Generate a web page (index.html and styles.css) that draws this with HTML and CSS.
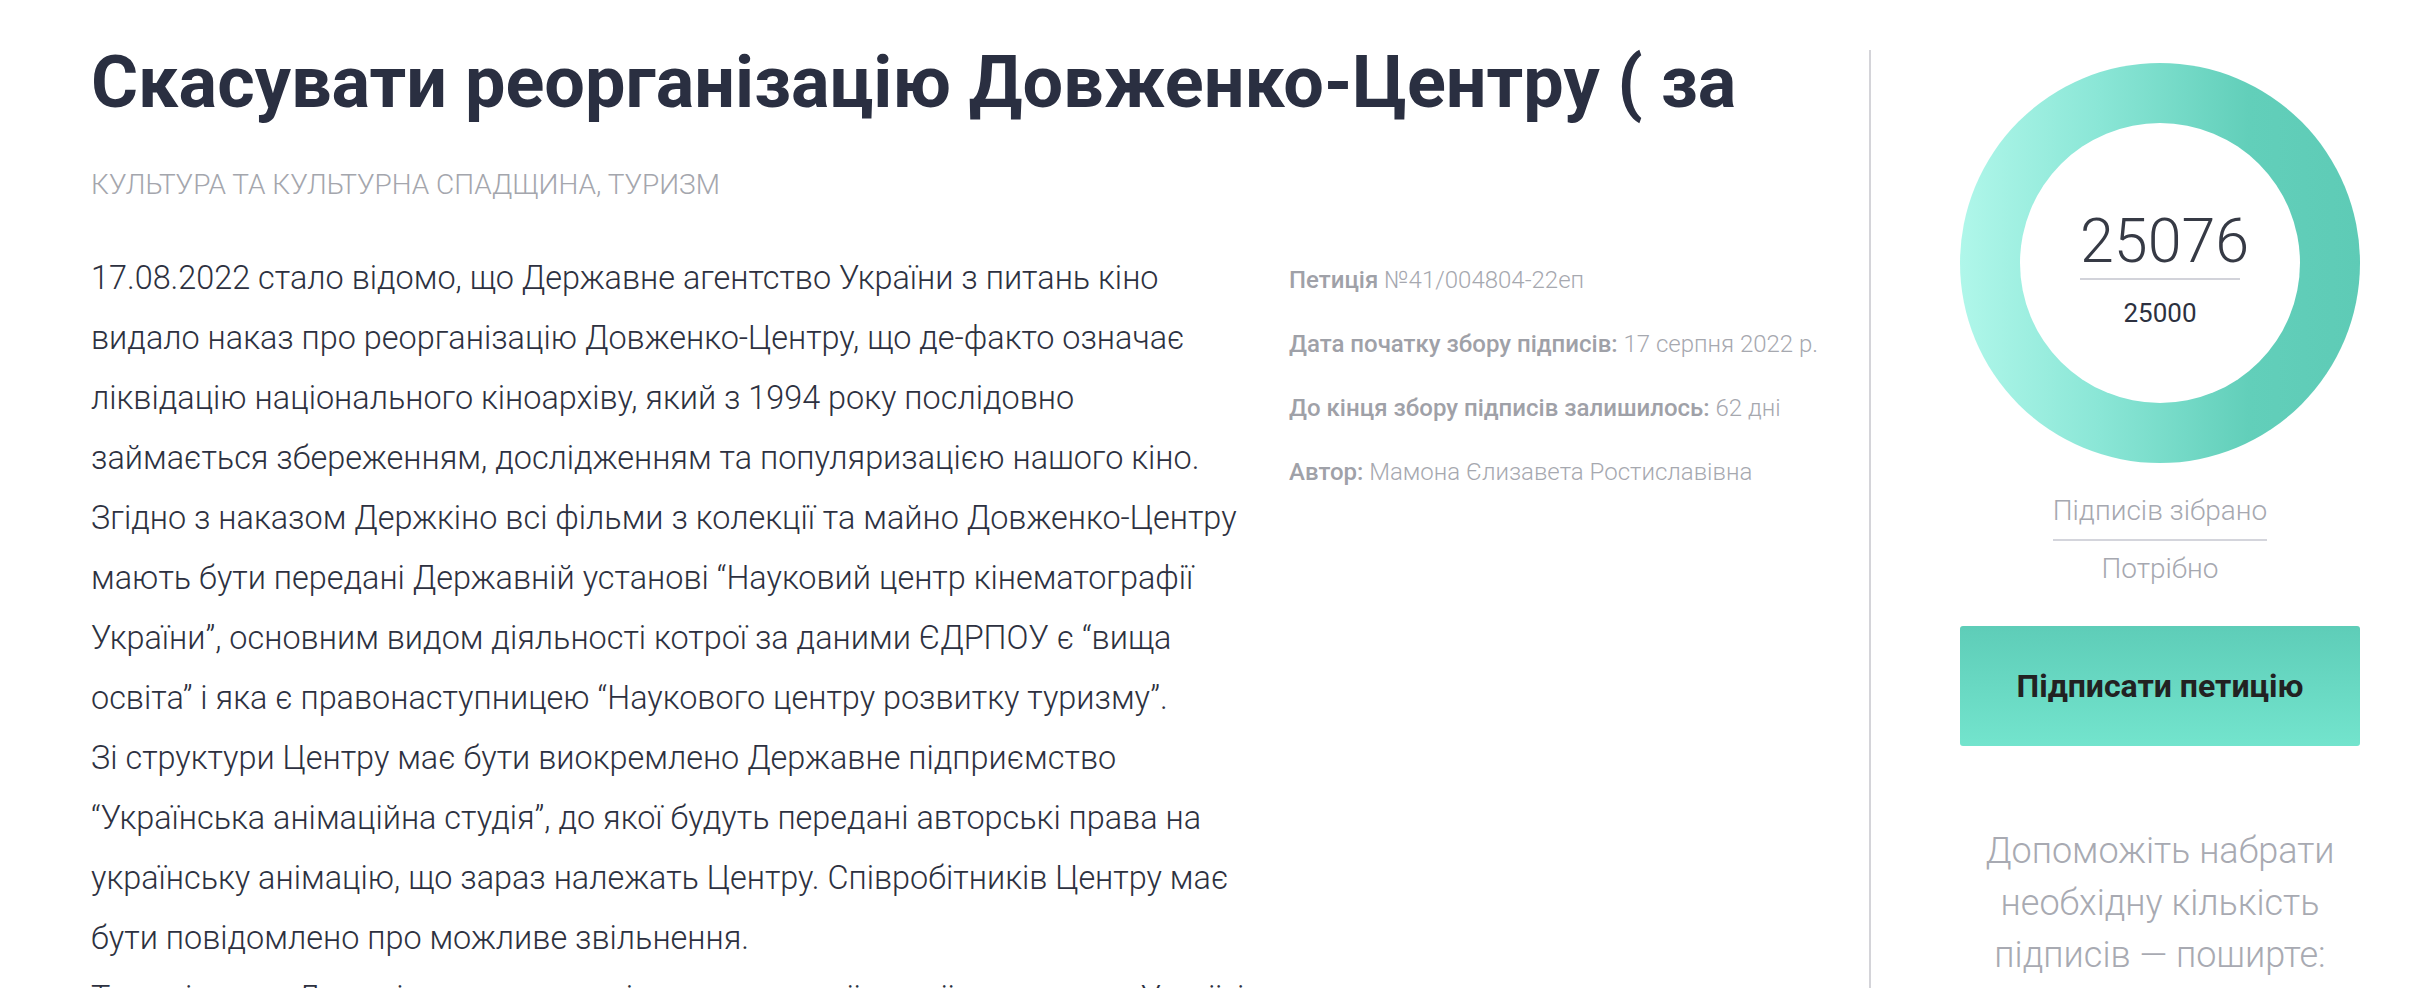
FILE: index.html
```html
<!DOCTYPE html>
<html lang="uk">
<head>
<meta charset="utf-8">
<title>Петиція</title>
<link rel="stylesheet" href="styles.css">
</head>
<body>
<div class="page">
  <main class="main">
    <h1 class="title">Скасувати реорганізацію Довженко-Центру ( за</h1>
    <div class="category">Культура та культурна спадщина, туризм</div>
    <div class="content">
      <div class="text">
        <p>17.08.2022 стало відомо, що Державне агентство України з питань кіно<br>видало наказ про реорганізацію Довженко-Центру, що де-факто означає<br>ліквідацію національного кіноархіву, який з 1994 року послідовно<br>займається збереженням, дослідженням та популяризацією нашого кіно.</p>
        <p>Згідно з наказом Держкіно всі фільми з колекції та майно Довженко-Центру<br>мають бути передані Державній установі “Науковий центр кінематографії<br>України”, основним видом діяльності котрої за даними ЄДРПОУ є “вища<br>освіта” і яка є правонаступницею “Наукового центру розвитку туризму”.</p>
        <p>Зі структури Центру має бути виокремлено Державне підприємство<br>“Українська анімаційна студія”, до якої будуть передані авторські права на<br>українську анімацію, що зараз належать Центру. Співробітників Центру має<br>бути повідомлено про можливе звільнення.</p>
        <p>Таке рішення Держкіно суперечить інтересам української культури та Україні загалом.</p>
      </div>
      <div class="meta">
        <div class="meta-row"><span class="label">Петиція</span> №41/004804-22еп</div>
        <div class="meta-row"><span class="label">Дата початку збору підписів:</span> 17 серпня 2022 р.</div>
        <div class="meta-row"><span class="label">До кінця збору підписів залишилось:</span> 62 дні</div>
        <div class="meta-row"><span class="label">Автор:</span> Мамона Єлизавета Ростиславівна</div>
      </div>
    </div>
  </main>
  <aside class="sidebar">
    <div class="ring">
      <div class="ring-inner">
        <div class="count">25076</div>
        <div class="needed">25000</div>
      </div>
    </div>
    <div class="labels">
      <div class="label-collected">Підписів зібрано</div>
      <div class="label-needed">Потрібно</div>
    </div>
    <button class="sign-btn" type="button">Підписати петицію</button>
    <p class="help">Допоможіть набрати необхідну кількість підписів — поширте:</p>
  </aside>
</div>
</body>
</html>
```

FILE: styles.css
```css
html, body {
  margin: 0;
  padding: 0;
  background: #ffffff;
  font-family: Roboto, "Noto Sans", "Liberation Sans", sans-serif;
}

body {
  width: 2418px;
  height: 988px;
  overflow: hidden;
}

.page {
  display: flex;
  align-items: stretch;
  height: 988px;
}

.main {
  width: 1778px;
  padding: 40px 0 0 91px;
  flex: none;
}

.title {
  margin: 0;
  font-size: 72px;
  line-height: 86px;
  font-weight: 700;
  color: #2a2f41;
  white-space: nowrap;
}

.category {
  margin-top: 42px;
  font-size: 28px;
  line-height: 34px;
  font-weight: 300;
  color: #a4a6ad;
  text-transform: uppercase;
}

.content {
  display: flex;
  margin-top: 46px;
  gap: 18px;
}

.text {
  width: 1180px;
  flex: none;
  font-size: 32.4px;
  line-height: 60px;
  font-weight: 300;
  color: #2d3140;
}

.text p {
  margin: 0;
}

.meta {
  font-size: 24px;
  line-height: 64px;
  color: #a6a8af;
  font-weight: 300;
}

.meta-row {
  white-space: nowrap;
}

.meta .label {
  font-weight: 500;
  color: #9fa1a8;
}

.sidebar {
  margin-top: 50px;
  border-left: 2px solid #d4d4d9;
  padding: 13px 0 0 89px;
  width: 400px;
  display: flex;
  flex-direction: column;
  align-items: center;
}

.ring {
  width: 400px;
  height: 400px;
  border-radius: 50%;
  background: linear-gradient(90deg, #b0f7ea 0%, #8ae6d6 35%, #62cfba 72%, #5ecbb6 100%);
  display: flex;
  align-items: center;
  justify-content: center;
  flex: none;
}

.ring-inner {
  width: 280px;
  height: 280px;
  border-radius: 50%;
  background: #ffffff;
  display: flex;
  flex-direction: column;
  align-items: center;
  box-sizing: border-box;
  padding-top: 89px;
}

.count {
  font-size: 61px;
  line-height: 58px;
  font-weight: 300;
  color: #363a45;
  width: 160px;
  text-align: center;
  padding-bottom: 8px;
  border-bottom: 2px solid #d2d3da;
}

.needed {
  margin-top: 20px;
  font-size: 26px;
  line-height: 27px;
  font-weight: 400;
  color: #2d3140;
}

.labels {
  margin-top: 28px;
  display: flex;
  flex-direction: column;
  align-items: center;
}

.label-collected,
.label-needed {
  font-size: 28px;
  line-height: 40px;
  font-weight: 300;
  color: #a6a8b0;
}

.label-collected {
  padding-bottom: 8px;
  border-bottom: 2px solid #d4d5dc;
}

.label-needed {
  margin-top: 8px;
}

.sign-btn {
  margin-top: 37px;
  width: 400px;
  height: 120px;
  border: none;
  border-radius: 3px;
  background: linear-gradient(180deg, #5ecdb8 0%, #73e4cd 100%);
  font-family: Roboto, "Noto Sans", "Liberation Sans", sans-serif;
  font-size: 32px;
  font-weight: 700;
  color: #222222;
  flex: none;
}

.help {
  margin: 79px 0 0 0;
  width: 400px;
  text-align: center;
  font-size: 36px;
  line-height: 52px;
  font-weight: 300;
  color: #a8aab2;
}
```
